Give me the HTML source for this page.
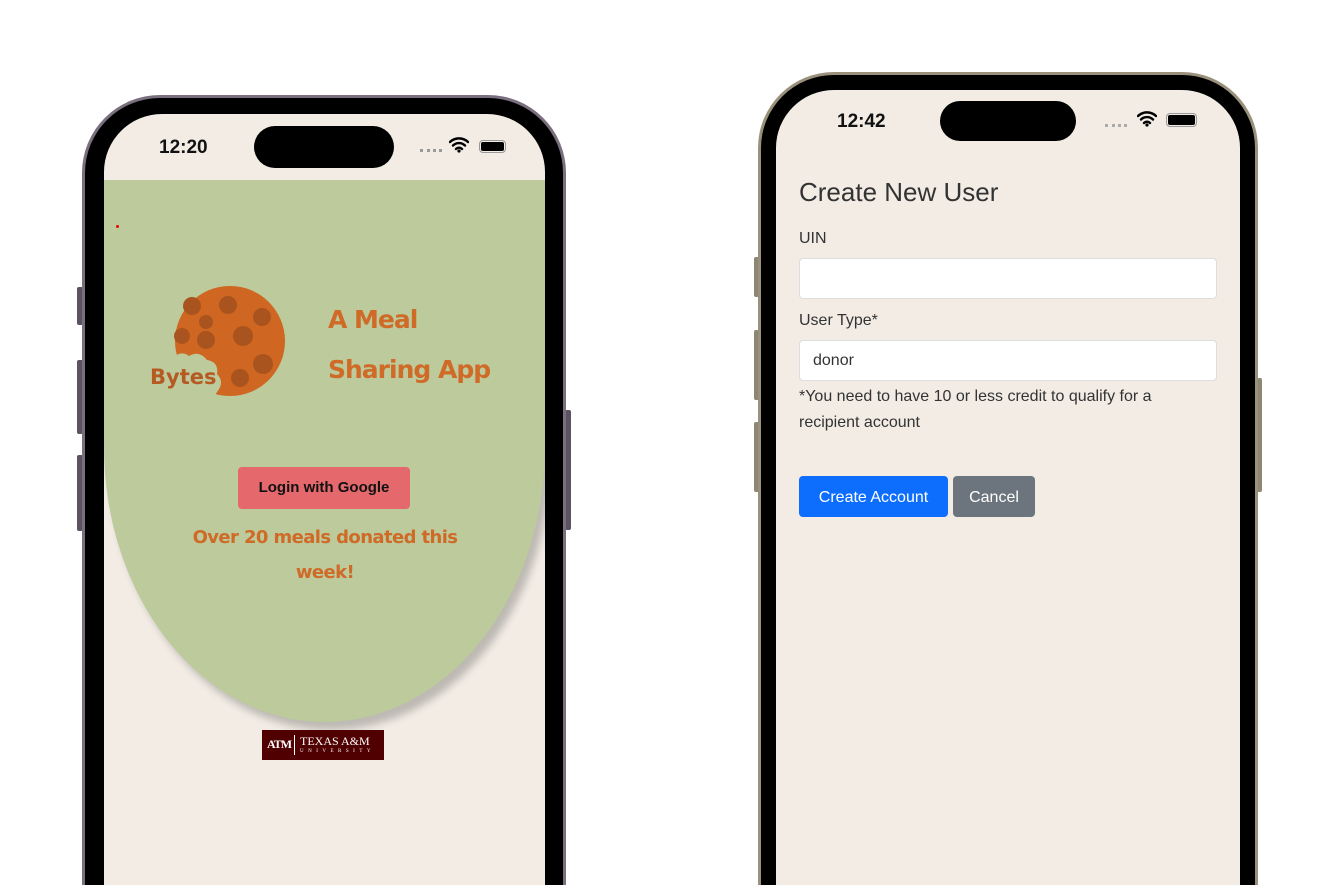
<!DOCTYPE html>
<html><head><style>
*{margin:0;padding:0;box-sizing:border-box}
html,body{width:1326px;height:885px;overflow:hidden}
body{background:#fff;position:relative;font-family:"Liberation Sans",sans-serif}
.abs{position:absolute}
.btn{position:absolute;border-radius:2px}
.cur{font-family:"DejaVu Sans","Liberation Sans",sans-serif;font-weight:bold;color:#cf6a27}
</style></head><body>
<!-- left phone -->
<div class="btn" style="left:77px;top:287px;width:6px;height:38px;background:#5d5262"></div>
<div class="btn" style="left:77px;top:360px;width:6px;height:74px;background:#5d5262"></div>
<div class="btn" style="left:77px;top:455px;width:6px;height:76px;background:#5d5262"></div>
<div class="btn" style="left:565px;top:410px;width:6px;height:120px;background:#5d5262"></div>
<div class="abs" style="left:82px;top:95px;width:484px;height:790px;border-radius:78px 78px 0 0;background:#000;border:3px solid #7a6f7e;border-bottom:none"></div>
<div class="abs" style="left:104px;top:114px;width:441px;height:771px;border-radius:58px 58px 0 0;background:#f2ece5;overflow:hidden">
  <div class="abs" style="left:0;top:66px;width:441px;height:542px;background:#bcca9c;border-radius:0 0 220px 220px / 0 0 275px 275px;box-shadow:6px 8px 8px rgba(0,0,0,.22)"></div>
  <div class="abs" style="left:12px;top:111px;width:3px;height:3px;background:#e00;border-radius:50%"></div>
</div>
<div class="abs" style="left:254px;top:126px;width:140px;height:42px;border-radius:21px;background:#000"></div>
<div class="abs" style="left:159px;top:137px;font-size:19px;font-weight:bold;color:#111">12:20</div>
<div class="abs" style="left:420px;top:149px;width:22px;height:3px;border-top:3px dotted #999"></div>
<svg class="abs" style="left:449px;top:137px" width="20" height="16" viewBox="0 0 20 16"><path d="M1 5a13 13 0 0 1 18 0M4 8.5a8.5 8.5 0 0 1 12 0M7 12a4 4 0 0 1 6 0" stroke="#000" stroke-width="2.4" fill="none" stroke-linecap="round"/><circle cx="10" cy="14" r="1.6"/></svg>
<div class="abs" style="left:479px;top:140px;width:27px;height:13px;border:1.5px solid #999;border-radius:4px;padding:1px"><div style="width:100%;height:100%;background:#000;border-radius:2px"></div></div>
<svg class="abs" style="left:145px;top:284px" width="145" height="120" viewBox="0 0 145 120">
 <circle cx="85" cy="57" r="55" fill="#cf6621"/>
 <g fill="#a9541e"><circle cx="47" cy="22" r="9"/><circle cx="83" cy="21" r="9"/><circle cx="61" cy="38" r="7"/><circle cx="117" cy="33" r="9"/><circle cx="37" cy="52" r="8"/><circle cx="61" cy="56" r="9"/><circle cx="98" cy="52" r="10"/><circle cx="118" cy="80" r="10"/><circle cx="95" cy="94" r="9"/></g>
 <path d="M28 74q8-8 16-2q10-6 18 4q12 2 10 14q8 8 0 18q-6 10-18 8q-4 6-14 4 -20 0 -30-20z" fill="#bcca9c"/>
 <text x="5" y="100" font-family="DejaVu Sans" font-weight="bold" font-size="21" fill="#b65a23">Bytes</text>
</svg>
<div class="abs cur" style="left:328px;top:295px;font-size:25px;line-height:50px;letter-spacing:-1px">A Meal<br>Sharing App</div>
<div class="abs" style="left:238px;top:467px;width:172px;height:42px;background:#e4686c;border-radius:4px;font-size:15px;font-weight:bold;color:#111;text-align:center;line-height:42px">Login with Google</div>
<div class="abs cur" style="left:150px;top:520px;width:350px;text-align:center;font-size:18px;line-height:35px;letter-spacing:-0.6px">Over 20 meals donated this<br>week!</div>
<div class="abs" style="left:262px;top:730px;width:122px;height:30px;background:#500000;color:#fff;font-family:'Liberation Serif',serif">
 <div class="abs" style="left:5px;top:7px;font-size:12px;font-weight:bold;letter-spacing:-1px">ATM</div>
 <div class="abs" style="left:32px;top:5px;width:1px;height:20px;background:#fff"></div>
 <div class="abs" style="left:38px;top:4px;font-size:12px">TEXAS A&amp;M</div>
 <div class="abs" style="left:38px;top:19px;font-size:5px;letter-spacing:4.5px">UNIVERSITY</div>
</div>
<!-- right phone -->
<div class="btn" style="left:754px;top:257px;width:5px;height:40px;background:#8d8670"></div>
<div class="btn" style="left:754px;top:330px;width:5px;height:70px;background:#8d8670"></div>
<div class="btn" style="left:754px;top:422px;width:5px;height:70px;background:#8d8670"></div>
<div class="btn" style="left:1257px;top:378px;width:5px;height:114px;background:#8d8670"></div>
<div class="abs" style="left:758px;top:72px;width:500px;height:813px;border-radius:76px 76px 0 0;background:#000;border:3px solid #9a917c;border-bottom:none"></div>
<div class="abs" style="left:776px;top:90px;width:464px;height:795px;border-radius:58px 58px 0 0;background:#f2ece5"></div>
<div class="abs" style="left:940px;top:101px;width:136px;height:40px;border-radius:20px;background:#000"></div>
<div class="abs" style="left:837px;top:111px;font-size:19px;font-weight:bold;color:#111">12:42</div>
<div class="abs" style="left:1105px;top:124px;width:22px;height:3px;border-top:3px dotted #aaa"></div>
<svg class="abs" style="left:1137px;top:111px" width="20" height="16" viewBox="0 0 20 16"><path d="M1 5a13 13 0 0 1 18 0M4 8.5a8.5 8.5 0 0 1 12 0M7 12a4 4 0 0 1 6 0" stroke="#000" stroke-width="2.4" fill="none" stroke-linecap="round"/><circle cx="10" cy="14" r="1.6"/></svg>
<div class="abs" style="left:1166px;top:113px;width:31px;height:14px;border:1.5px solid #999;border-radius:4px;padding:1px"><div style="width:100%;height:100%;background:#000;border-radius:2px"></div></div>
<div class="abs" style="left:799px;top:177px;font-size:26px;color:#333">Create New User</div>
<div class="abs" style="left:799px;top:230px;font-size:16px;color:#333">UIN</div>
<div class="abs" style="left:799px;top:258px;width:418px;height:41px;background:#fff;border:1px solid #ddd;border-radius:4px"></div>
<div class="abs" style="left:799px;top:312px;font-size:16px;color:#333">User Type*</div>
<div class="abs" style="left:799px;top:340px;width:418px;height:41px;background:#fff;border:1px solid #ddd;border-radius:4px;padding:0 13px;line-height:40px;font-size:16px;color:#333">donor</div>
<div class="abs" style="left:799px;top:384px;font-size:16px;line-height:26px;color:#333;width:395px">*You need to have 10 or less credit to qualify for a recipient account</div>
<div class="abs" style="left:799px;top:476px;width:149px;height:41px;background:#0d6efd;border-radius:4px;color:#fff;font-size:16px;text-align:center;line-height:43px">Create Account</div>
<div class="abs" style="left:953px;top:476px;width:82px;height:41px;background:#6c757d;border-radius:4px;color:#fff;font-size:16px;text-align:center;line-height:43px">Cancel</div>
</body></html>
